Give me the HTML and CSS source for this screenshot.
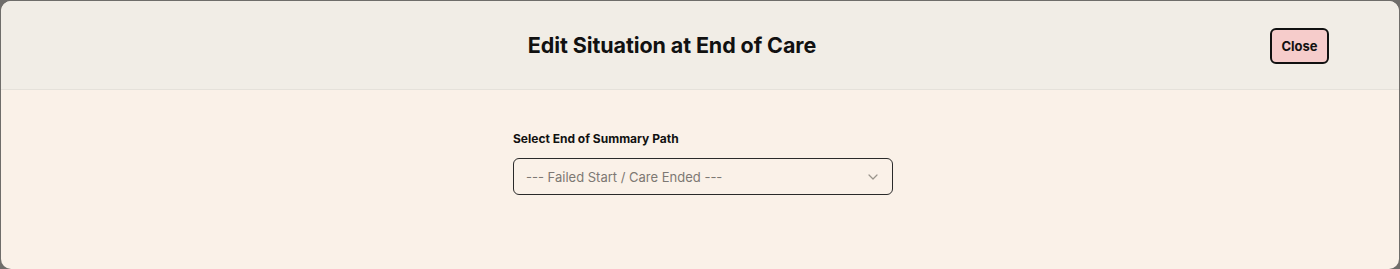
FILE: index.html
```html
<!DOCTYPE html>
<html>
<head>
<meta charset="utf-8">
<link rel="stylesheet" href="styles.css">
</head>
<body>
<div class="modal">
  <header class="modal-header">
    <h1 class="title">Edit Situation at End of Care</h1>
    <button class="close-btn">Close</button>
  </header>
  <main class="modal-body">
    <div class="field">
      <label class="label">Select End of Summary Path</label>
      <div class="select">
        <span class="placeholder">--- Failed Start / Care Ended ---</span>
        <svg class="chevron" width="10" height="6" viewBox="0 0 10 6"><path d="M1 1l4 4 4-4" fill="none" stroke="#9a948c" stroke-width="1.2" stroke-linecap="round" stroke-linejoin="round"/></svg>
      </div>
    </div>
  </main>
</div>
</body>
</html>
```
FILE: styles.css
```css
* { box-sizing: border-box; }
html, body { margin: 0; height: 100%; }
body {
  background: #6f6d6a;
  padding: 1px 1px 0 1px;
  font-family: Inter, "Noto Sans", sans-serif;
  color: #111;
}
.modal {
  height: 268px;
  border-radius: 10px;
  overflow: hidden;
  background: #faf1e8;
  display: flex;
  flex-direction: column;
}
.modal-header {
  height: 89px;
  flex: none;
  background: #f1ede6;
  border-bottom: 1px solid #e5e1da;
  display: flex;
  align-items: center;
  justify-content: center;
  position: relative;
}
.title {
  margin: 0 56px 0 0;
  font-size: 21.5px;
  font-weight: 700;
  letter-spacing: -0.1px;
  color: #111;
}
.close-btn {
  position: absolute;
  right: 70px;
  top: 27px;
  width: 59px;
  height: 36px;
  background: #f6cccb;
  border: 2px solid #111;
  border-radius: 6px;
  font-family: Inter, "Noto Sans", sans-serif;
  font-size: 13px;
  font-weight: 700;
  color: #111;
  padding: 0;
}
.modal-body {
  flex: 1;
  display: flex;
  justify-content: center;
  padding-top: 41px;
}
.field {
  width: 380px;
  margin-left: 6px;
  display: flex;
  flex-direction: column;
}
.label {
  font-size: 12px;
  font-weight: 700;
  color: #111;
  margin-bottom: 11px;
  line-height: 16px;
}
.select {
  height: 37px;
  border: 1px solid #2a2a2a;
  border-radius: 6px;
  display: flex;
  align-items: center;
  justify-content: space-between;
  padding: 0 14px 0 12px;
}
.placeholder {
  font-size: 13px;
  color: #7d7873;
}
.chevron { display: block; }
```
